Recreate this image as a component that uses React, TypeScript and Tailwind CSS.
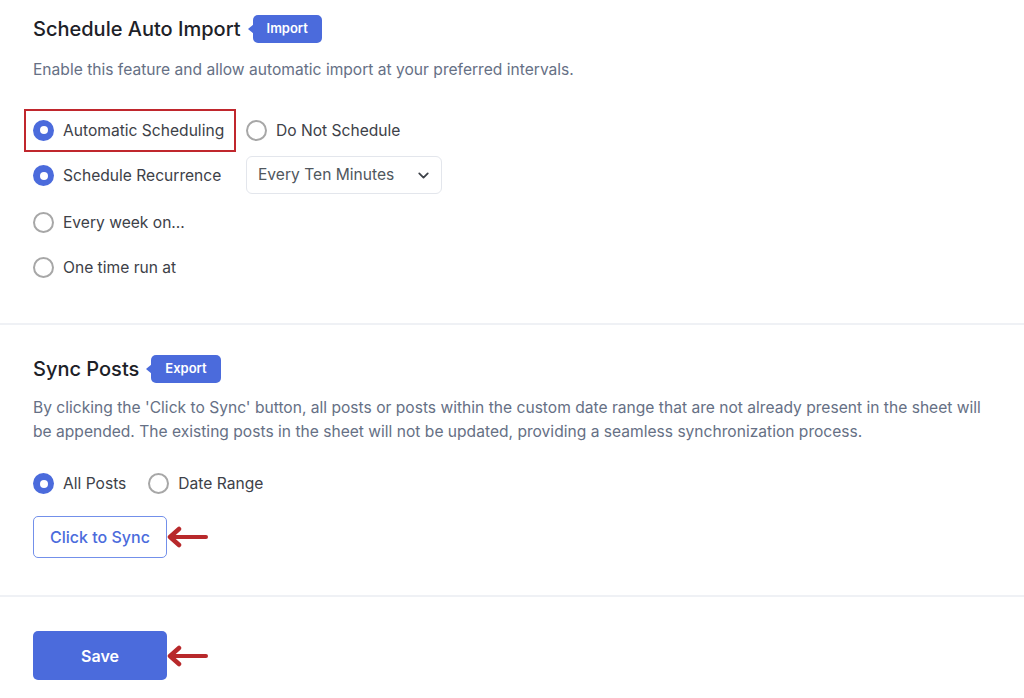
import { ChevronDown } from "lucide-react";

const BLUE = "#4b6bdc";

function Badge({ label }: { label: string }) {
	return (
		<span className="relative ml-[12px] inline-flex h-[28px] items-center rounded-[5px] bg-[#4b6bdc] px-[14px] text-[13px] font-semibold text-white">
			<span className="absolute left-[-5px] top-1/2 h-0 w-0 -translate-y-1/2 border-y-[5px] border-r-[6px] border-y-transparent border-r-[#4b6bdc]" />
			{label}
		</span>
	);
}

function Radio({ checked, label }: { checked?: boolean; label: string }) {
	return (
		<span className="inline-flex items-center">
			{checked ? (
				<span className="flex h-[21px] w-[21px] items-center justify-center rounded-full bg-[#4b6bdc]">
					<span className="h-[8px] w-[8px] rounded-full bg-white" />
				</span>
			) : (
				<span className="h-[21px] w-[21px] rounded-full border-2 border-[#a7a7a7] bg-white" />
			)}
			<span className="ml-[9px] text-[15.6px] text-[#3d4148]">{label}</span>
		</span>
	);
}

function Arrow() {
	return (
		<svg width="42" height="22" viewBox="0 0 42 22" className="-ml-[1px]" aria-hidden>
			<path d="M40 11 H6" stroke="#b8292b" strokeWidth="4" strokeLinecap="round" />
			<path
				d="M13 3 L4 11 L13 19"
				fill="none"
				stroke="#b8292b"
				strokeWidth="4.5"
				strokeLinecap="round"
				strokeLinejoin="round"
			/>
		</svg>
	);
}

export default function App() {
	return (
		<main
			className="min-h-[698px] bg-white"
			style={{ fontFamily: "Inter, 'Noto Sans', sans-serif" }}
		>
			{/* Schedule auto import */}
			<section className="border-b-2 border-[#eff1f5] px-[33px] pb-[33px] pt-[15px]">
				<div className="flex h-[28px] items-center">
					<h2 className="text-[20px] font-medium text-[#1d2127]">Schedule Auto Import</h2>
					<Badge label="Import" />
				</div>
				<p className="mt-[15px] text-[15.6px] leading-[24px] text-[#667085]">
					Enable this feature and allow automatic import at your preferred intervals.
				</p>
				<div className="-ml-[9px] mt-[27px] grid grid-cols-[212px_auto] gap-x-[10px]">
					<div className="flex h-[43px] items-center border-2 border-[#c0272d] px-[7px]">
						<Radio checked label="Automatic Scheduling" />
					</div>
					<div className="flex h-[43px] items-center">
						<Radio label="Do Not Schedule" />
					</div>
					<div className="mt-[4px] flex h-[38px] items-center border-2 border-transparent px-[7px] pt-[2px]">
						<Radio checked label="Schedule Recurrence" />
					</div>
					<div className="mt-[4px] flex h-[38px] w-[196px] items-center justify-between rounded-[6px] border border-[#e3e6ec] pl-[11px] pr-[9px]">
						<span className="text-[15.6px] text-[#50575e]">Every Ten Minutes</span>
						<ChevronDown size={17} strokeWidth={2.5} className="text-[#3d4148]" />
					</div>
					<div className="col-span-2 mt-[6px] flex h-[45px] items-center border-2 border-transparent px-[7px]">
						<Radio label="Every week on..." />
					</div>
					<div className="col-span-2 flex h-[45px] items-center border-2 border-transparent px-[7px]">
						<Radio label="One time run at" />
					</div>
				</div>
			</section>

			{/* Sync posts */}
			<section className="border-b-2 border-[#eff1f5] px-[33px] pb-[37px] pt-[30px]">
				<div className="flex h-[28px] items-center">
					<h2 className="text-[20px] font-medium text-[#1d2127]">Sync Posts</h2>
					<Badge label="Export" />
				</div>
				<p className="mt-[13px] text-[15.6px] leading-[24px] text-[#667085]">
					By clicking the 'Click to Sync' button, all posts or posts within the custom date range
					that are not already present in the sheet will be appended. The existing posts in the
					sheet will not be updated, providing a seamless synchronization process.
				</p>
				<div className="mt-[28px] flex h-[24px] items-center gap-[22px]">
					<Radio checked label="All Posts" />
					<Radio label="Date Range" />
				</div>
				<div className="mt-[20px] flex items-center">
					<button
						type="button"
						className="h-[42px] w-[134px] rounded-[5px] border border-[#7390ea] text-[16px] font-medium"
						style={{ color: BLUE }}
					>
						Click to Sync
					</button>
					<Arrow />
				</div>
			</section>

			{/* Save */}
			<section className="px-[33px] pt-[34px]">
				<div className="flex items-center">
					<button
						type="button"
						className="h-[49px] w-[134px] rounded-[5px] bg-[#4b6bdc] text-[16px] font-semibold text-white"
					>
						Save
					</button>
					<Arrow />
				</div>
			</section>
		</main>
	);
}
